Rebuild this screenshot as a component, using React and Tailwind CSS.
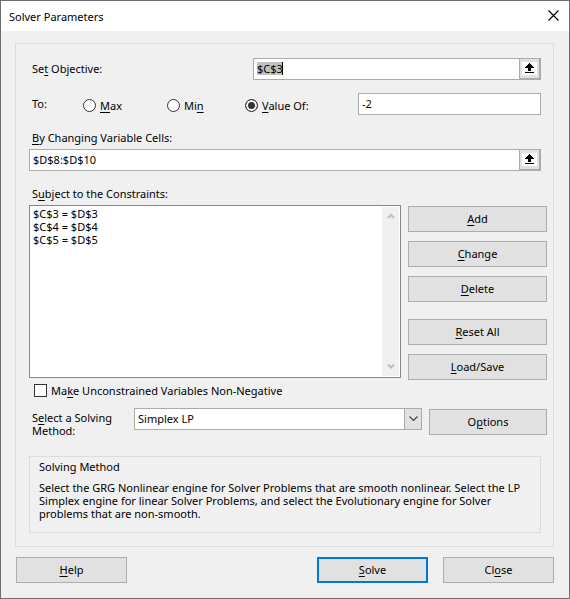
import { useEffect, useRef, useState } from 'react'

const buttonBase = 'h-[26px] bg-[#e1e1e1] pb-0.5 text-center'

// Renders a label with its access key underlined
function Hot({ text, at }) {
  return (
    <>
      {text.slice(0, at)}
      <span className="underline decoration-1 underline-offset-2">{text[at]}</span>
      {text.slice(at + 1)}
    </>
  )
}

function PushButton({ text, at, className }) {
  return (
    <button type="button" className={`${buttonBase} border border-[#adadad] ${className}`}>
      <Hot text={text} at={at} />
    </button>
  )
}

function RefButton({ label }) {
  return (
    <button
      type="button"
      aria-label={label}
      className="w-[22px] shrink-0 border border-r-2 border-b-2 border-[#ababab] bg-[#e1e1e1] flex items-center justify-center"
    >
      <svg width="15" height="13" viewBox="0 0 15 13" shapeRendering="crispEdges">
        <rect width="15" height="13" fill="#fff" />
        <path d="M7 1h1v1h1v1h1v1h1v1h1v1h-3v3H6V6H3V5h1V4h1V3h1V2h1z" fill="#000" />
        <rect x="3" y="10" width="9" height="1" fill="#000" />
      </svg>
    </button>
  )
}

function ScrollArrow({ down }) {
  return (
    <svg width="8" height="7" viewBox="0 0 8 7">
      <path d={down ? 'M1 1.5L4 4.5L7 1.5' : 'M1 5L4 2L7 5'} fill="none" stroke="#bfbfbf" strokeWidth="2" />
    </svg>
  )
}

export default function App() {
  const objectiveRef = useRef(null)
  const [objective, setObjective] = useState('$C$3')
  const [target, setTarget] = useState('value')
  const [value, setValue] = useState('-2')
  const [cells, setCells] = useState('$D$8:$D$10')
  const [nonNegative, setNonNegative] = useState(false)
  const constraints = ['$C$3 = $D$3', '$C$4 = $D$4', '$C$5 = $D$5']

  useEffect(() => {
    objectiveRef.current.focus()
    objectiveRef.current.select()
  }, [])

  return (
    <div className="min-h-screen flex flex-col border border-[#6e6e6e] bg-[#f0f0f0] font-['Noto_Sans','Open_Sans',sans-serif] text-[11px] leading-[13px] text-black">
      <header className="h-[30px] bg-white pl-2 pr-[10px] flex items-center justify-between">
        <h1>Solver Parameters</h1>
        <button type="button" aria-label="Close window" className="pb-0.5">
          <svg width="11" height="11" viewBox="0 0 11 11">
            <path d="M.5.5l10 10M10.5.5l-10 10" fill="none" stroke="#000" strokeWidth="1.1" />
          </svg>
        </button>
      </header>

      <main className="mt-3 ml-[14px] mr-[15px] border border-[#dcdcdc] pt-[14px] pb-[13px] pl-[13px] pr-[6px]">
        {/* Objective */}
        <div className="mr-[6px] flex items-center">
          <label htmlFor="objective" className="w-[224px] shrink-0 pl-[3px] pb-0.5">
            <Hot text="Set Objective:" at={2} />
          </label>
          <div className="relative flex-1 flex h-[22px]">
            <input
              id="objective"
              ref={objectiveRef}
              value={objective}
              onChange={(e) => setObjective(e.target.value)}
              className="flex-1 min-w-0 border border-r-0 border-[#ababab] bg-white px-[3px] pb-0.5 outline-none selection:bg-[#c0c0c0] selection:text-black"
            />
            <span className="absolute left-[29px] top-1 w-px h-[13px] bg-black" />
            <RefButton label="Pick objective cell" />
          </div>
        </div>

        {/* Target */}
        <fieldset className="mt-[13px] mr-[6px] flex items-center">
          <span className="w-[54px] pl-[3px] pb-0.5">To:</span>
          {[
            { id: 'max', text: 'Max', at: 0, width: 'w-[84px]' },
            { id: 'min', text: 'Min', at: 2, width: 'w-[78px]' },
            { id: 'value', text: 'Value Of:', at: 0, width: 'w-[113px]' },
          ].map((o) => (
            <label key={o.id} className={`${o.width} pt-0.5 shrink-0 flex items-center gap-1`}>
              <input
                type="radio"
                name="target"
                checked={target === o.id}
                onChange={() => setTarget(o.id)}
                className="appearance-none size-[13px] rounded-full border border-[#333] bg-white checked:bg-[#333] checked:shadow-[inset_0_0_0_2px_#fff]"
              />
              <span>
                <Hot text={o.text} at={o.at} />
              </span>
            </label>
          ))}
          <input
            aria-label="Target value"
            value={value}
            onChange={(e) => setValue(e.target.value)}
            className="flex-1 min-w-0 h-[22px] border border-[#ababab] bg-white px-[3px] pb-0.5 outline-none"
          />
        </fieldset>

        {/* Variable cells */}
        <div className="mt-4 mr-[6px]">
          <label htmlFor="cells" className="block pl-[3px]">
            <Hot text="By Changing Variable Cells:" at={0} />
          </label>
          <div className="mt-[5px] flex h-[22px]">
            <input
              id="cells"
              value={cells}
              onChange={(e) => setCells(e.target.value)}
              className="flex-1 min-w-0 border border-r-0 border-[#ababab] bg-white px-[3px] pb-0.5 outline-none"
            />
            <RefButton label="Pick variable cells" />
          </div>
        </div>

        {/* Constraints */}
        <label htmlFor="constraints" className="block mt-4 pl-[3px]">
          <Hot text="Subject to the Constraints:" at={1} />
        </label>
        <div className="mt-[5px] flex gap-[7px]">
          <div className="flex-1 min-w-0 h-[173px] flex border border-[#828790] bg-white px-px pb-px">
            <select
              id="constraints"
              size={12}
              className="flex-1 min-w-0 appearance-none overflow-hidden bg-white outline-none"
            >
              {constraints.map((c) => (
                <option key={c} className="min-h-0 h-[13px] px-[2px] py-0">{c}</option>
              ))}
            </select>
            <div className="mt-px w-[17px] bg-[#f0f0f0] py-[6px] flex flex-col items-center justify-between">
              <ScrollArrow />
              <ScrollArrow down />
            </div>
          </div>
          <div className="w-[139px] pt-px flex flex-col gap-[9px]">
            <PushButton text="Add" at={0} />
            <PushButton text="Change" at={0} />
            <PushButton text="Delete" at={0} />
            <PushButton text="Reset All" at={0} className="mt-2" />
            <PushButton text="Load/Save" at={0} />
          </div>
        </div>

        <label className="mt-1 ml-[5px] flex items-center gap-1">
          <input
            type="checkbox"
            checked={nonNegative}
            onChange={(e) => setNonNegative(e.target.checked)}
            className="appearance-none size-[13px] border border-[#333] bg-white checked:bg-[#333]"
          />
          <span>
            <Hot text="Make Unconstrained Variables Non-Negative" at={2} />
          </span>
        </label>

        {/* Method */}
        <div className="mt-[11px] flex items-start">
          <label htmlFor="method" className="w-[105px] shrink-0 pl-[3px] pt-[3px]">
            <Hot text="Select a Solving" at={1} />
            <br />
            Method:
          </label>
          <div className="flex-1 grid">
            <select
              id="method"
              defaultValue="Simplex LP"
              className="col-start-1 row-start-1 h-[22px] appearance-none border border-[#ababab] bg-white px-[3px] pb-0.5 outline-none"
            >
              <option>GRG Nonlinear</option>
              <option>Simplex LP</option>
              <option>Evolutionary</option>
            </select>
            <span className="col-start-1 row-start-1 justify-self-end w-[18px] h-[22px] border border-[#ababab] bg-[#e1e1e1] flex items-center justify-center pointer-events-none">
              <svg width="9" height="6" viewBox="0 0 9 6">
                <path d="M.5 .5l4 4l4-4" fill="none" stroke="#444" strokeWidth="1.2" />
              </svg>
            </span>
          </div>
          <PushButton text="Options" at={1} className="w-[118px] ml-[7px] mt-px" />
        </div>

        <section className="mt-[19px] mr-[6px] border border-[#dcdcdc] px-[9px] pt-[3px] pb-3">
          <h2>Solving Method</h2>
          <p className="mt-2">
            Select the GRG Nonlinear engine for Solver Problems that are smooth nonlinear. Select the LP Simplex engine
            for linear Solver Problems, and select the Evolutionary engine for Solver problems that are non-smooth.
          </p>
        </section>
      </main>

      <footer className="mt-[10px] mb-[15px] ml-[15px] mr-[15px] flex">
        <PushButton text="Help" at={0} className="w-[111px] mr-auto" />
        <button type="button" className={`${buttonBase} w-[111px] mr-[15px] border-2 border-[#0078d7]`}>
          <Hot text="Solve" at={0} />
        </button>
        <PushButton text="Close" at={2} className="w-[111px]" />
      </footer>
    </div>
  )
}
